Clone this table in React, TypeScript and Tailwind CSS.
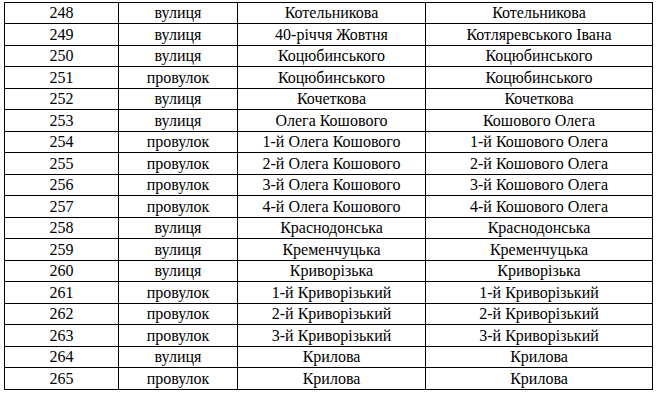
const rows: [string, string, string, string][] = [
  ["248", "вулиця", "Котельникова", "Котельникова"],
  ["249", "вулиця", "40-річчя Жовтня", "Котляревського Івана"],
  ["250", "вулиця", "Коцюбинського", "Коцюбинського"],
  ["251", "провулок", "Коцюбинського", "Коцюбинського"],
  ["252", "вулиця", "Кочеткова", "Кочеткова"],
  ["253", "вулиця", "Олега Кошового", "Кошового Олега"],
  ["254", "провулок", "1-й Олега Кошового", "1-й Кошового Олега"],
  ["255", "провулок", "2-й Олега Кошового", "2-й Кошового Олега"],
  ["256", "провулок", "3-й Олега Кошового", "3-й Кошового Олега"],
  ["257", "провулок", "4-й Олега Кошового", "4-й Кошового Олега"],
  ["258", "вулиця", "Краснодонська", "Краснодонська"],
  ["259", "вулиця", "Кременчуцька", "Кременчуцька"],
  ["260", "вулиця", "Криворізька", "Криворізька"],
  ["261", "провулок", "1-й Криворізький", "1-й Криворізький"],
  ["262", "провулок", "2-й Криворізький", "2-й Криворізький"],
  ["263", "провулок", "3-й Криворізький", "3-й Криворізький"],
  ["264", "вулиця", "Крилова", "Крилова"],
  ["265", "провулок", "Крилова", "Крилова"],
];

export default function App() {
  return (
    <div className="w-[669px] h-[404px] bg-white pl-[4px] pt-[2px] text-black">
      <table className="table-fixed border-collapse w-[648px] font-['Liberation_Serif'] text-[16px]">
        <colgroup>
          <col className="w-[114px]" />
          <col className="w-[119px]" />
          <col className="w-[188px]" />
          <col className="w-[227px]" />
        </colgroup>
        <tbody>
          {rows.map((r, idx) => (
            <tr key={r[0]} className={idx % 2 === 0 ? "h-[21px]" : "h-[22px]"}>
              {r.map((cell, i) => (
                <td key={i} className="border border-black p-0 text-center align-middle leading-none">
                  {cell}
                </td>
              ))}
            </tr>
          ))}
        </tbody>
      </table>
    </div>
  );
}
